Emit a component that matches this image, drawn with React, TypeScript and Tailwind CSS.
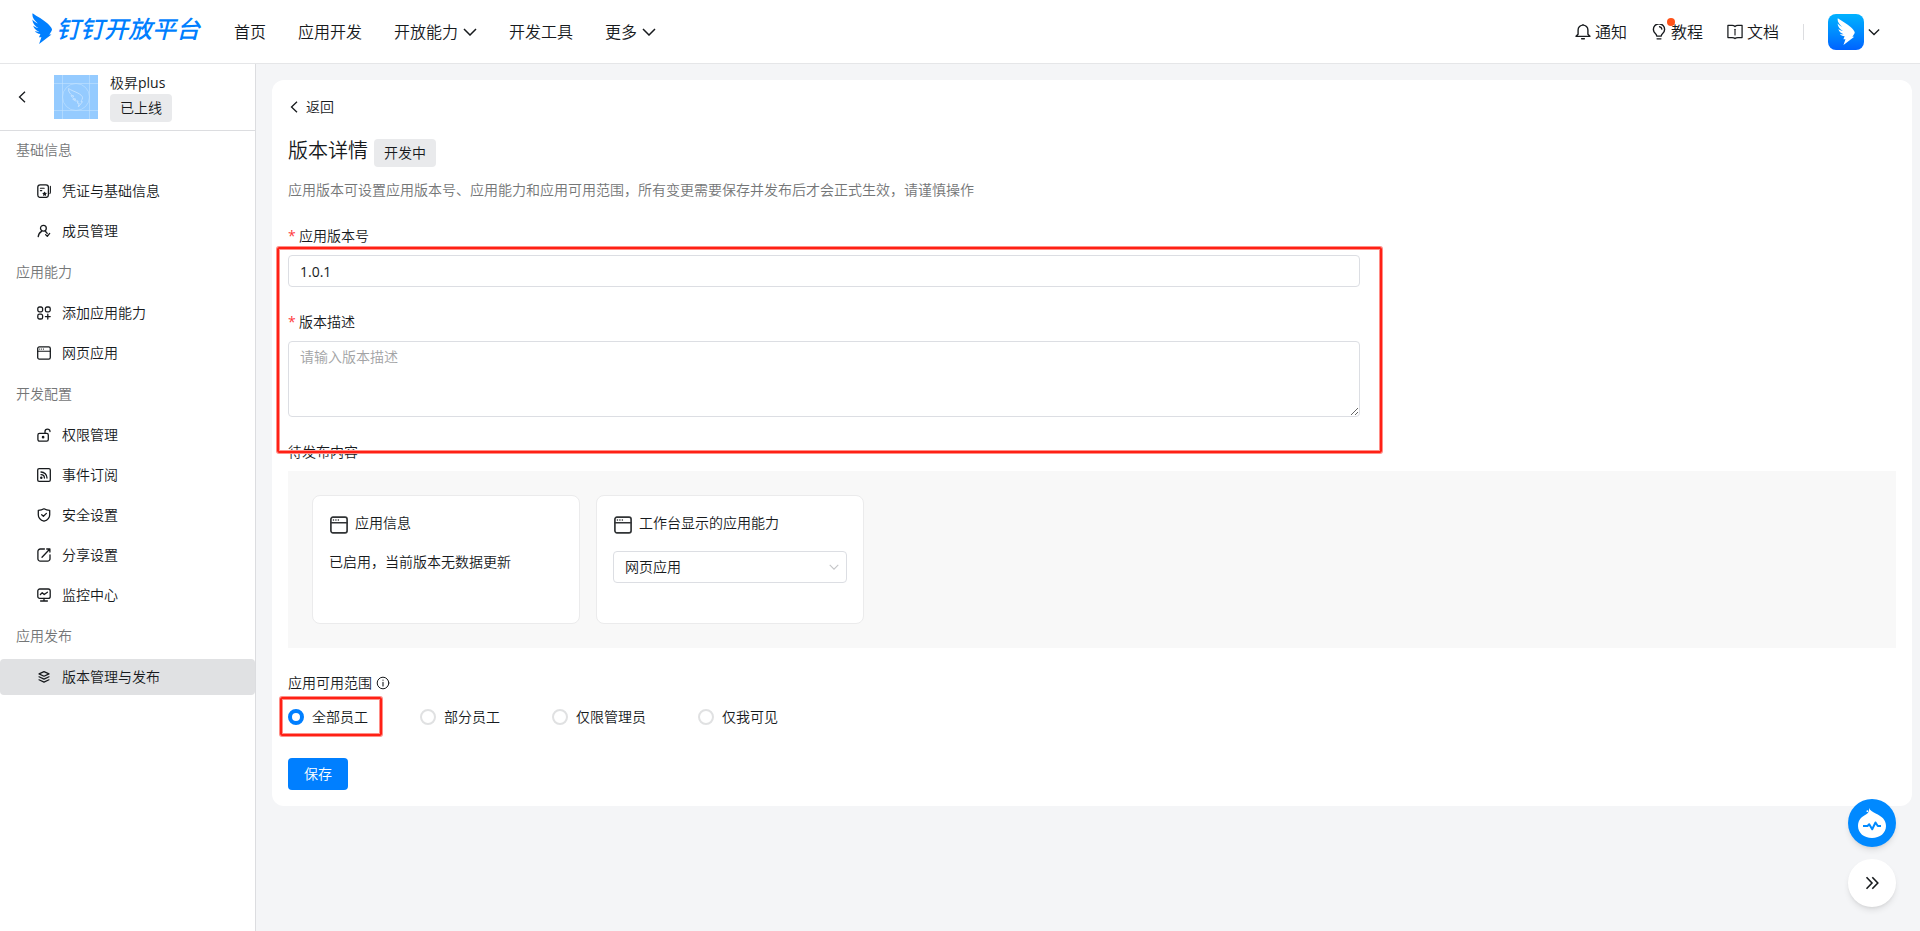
import { useState, type ReactNode } from "react";

interface IconProps {
  className?: string;
}

interface MenuItem {
  label: string;
  icon: (props: IconProps) => ReactNode;
}

interface MenuGroup {
  title: string;
  items: MenuItem[];
}

function Icon({ className = "size-3.5", children }: IconProps & { children: ReactNode }) {
  return (
    <svg
      viewBox="0 0 14 14"
      className={`shrink-0 ${className}`}
      fill="none"
      stroke="currentColor"
      strokeWidth="1.3"
      strokeLinecap="round"
      strokeLinejoin="round"
      aria-hidden="true"
    >
      {children}
    </svg>
  );
}

const CredentialIcon = (props: IconProps) => (
  <Icon {...props}>
    <rect x="0.8" y="0.8" width="10.6" height="12.6" rx="2.4" />
    <path d="M13.4 2.4v6l-.5 1.2M3.4 4.2h3.8M3.4 6.6h1.4" strokeWidth="1.1" />
    <path
      d="M7.6 7.4l.8 1.4 1.6.3-1.1 1.2.2 1.6-1.5-.7-1.5.7.2-1.6-1.1-1.2 1.6-.3z"
      fill="currentColor"
      stroke="none"
    />
  </Icon>
);

const MemberIcon = (props: IconProps) => (
  <Icon {...props}>
    <circle cx="6.4" cy="4.2" r="2.9" />
    <path d="M1.2 12.6c.3-2.7 1.5-4.3 3.4-5.3M8.2 7.3c1 .5 1.6 1.3 2 2.3M8.6 10.6l1.7 1.8 2.4-3" />
  </Icon>
);

const AddAbilityIcon = (props: IconProps) => (
  <Icon {...props}>
    <rect x="0.8" y="1" width="4.8" height="4.8" rx="1.6" />
    <rect x="8.4" y="1" width="4.8" height="4.8" rx="1.6" />
    <rect x="0.8" y="8.2" width="4.8" height="4.8" rx="1.6" />
    <path d="M10.8 8.2v4.8M8.4 10.6h4.8" />
  </Icon>
);

const WindowIcon = (props: IconProps) => (
  <Icon {...props}>
    <rect x="0.7" y="0.9" width="12.6" height="12.2" rx="1.6" />
    <path d="M.7 5.2h12.6" strokeWidth="1.1" />
    <path d="M2.6 3.1h.2M4.5 3.1h.2M6.4 3.1h.2" strokeWidth="1" />
  </Icon>
);

const UnlockIcon = (props: IconProps) => (
  <Icon {...props}>
    <rect x="0.9" y="5.4" width="10.4" height="7.8" rx="1.6" />
    <path d="M8 5.2V3.6a2.5 2.5 0 0 1 5 0" />
    <circle cx="6.1" cy="9.2" r="0.7" fill="currentColor" />
  </Icon>
);

const FeedIcon = (props: IconProps) => (
  <Icon {...props}>
    <rect x="0.7" y="0.7" width="12.6" height="12.6" rx="1.4" />
    <path d="M4 4c3.4 0 6 2.6 6 6M4 6.6c2 0 3.4 1.4 3.4 3.4" />
    <circle cx="4.3" cy="9.7" r="0.6" fill="currentColor" />
  </Icon>
);

const ShieldIcon = (props: IconProps) => (
  <Icon {...props}>
    <path d="M7 .8c1.7 1.1 3.5 1.6 5.7 1.6v4.3c0 3-2.2 5.4-5.7 6.5-3.5-1.1-5.7-3.5-5.7-6.5V2.4C3.5 2.4 5.3 1.9 7 .8z" />
    <path d="M4.7 6.7l1.7 1.6 3-2.9" />
  </Icon>
);

const ShareIcon = (props: IconProps) => (
  <Icon {...props}>
    <path d="M7.4 1H3.3A2.4 2.4 0 0 0 .9 3.4v7.3a2.4 2.4 0 0 0 2.4 2.4h7.3a2.4 2.4 0 0 0 2.4-2.4V6.8" />
    <path d="M5 9.2l7.6-8M9.7 1h3.2v3.1" />
  </Icon>
);

const MonitorIcon = (props: IconProps) => (
  <Icon {...props}>
    <rect x="0.8" y="1" width="12.4" height="9.4" rx="2" />
    <path d="M3.4 6.5l1.8-1.7 2 1.8 3.2-2.4M7 10.4v2.4M3.6 13h6.8" />
  </Icon>
);

const LayersIcon = (props: IconProps) => (
  <Icon {...props}>
    <path
      d="M7 1.6l5 2.3-5 2.3-5-2.3zM2 6.8l5 2.3 5-2.3M2 9.8l5 2.3 5-2.3"
      strokeWidth="1.2"
    />
  </Icon>
);

const BellIcon = (props: IconProps) => (
  <Icon {...props}>
    <path
      d="M.9 10.8h12.2L11.3 8.9V5.3a4.3 4.3 0 0 0-8.6 0v3.600zM5.800 12.900h2.400M7 1V.5"
      strokeWidth="1.2"
    />
  </Icon>
);

const BulbIcon = (props: IconProps) => (
  <Icon {...props}>
    <path
      d="M5 10.6c0-1.100-.4-1.500-1.200-2.200a4.900 4.900 0 1 1 6.400 0C9.400 9.100 9 9.500 9 10.600zM5.300 13h3.400M7.500 2.400c1.100.2 1.800.9 2 2"
      strokeWidth="1.2"
    />
  </Icon>
);

const BookIcon = (props: IconProps) => (
  <Icon {...props}>
    <path
      d="M7 2.2C6.300 1.500 5.500 1.300 4.500 1.300H.8v10.600h3.700c1 0 1.900.2 2.500.8.600-.6 1.500-.8 2.500-.8h3.700V1.300H9.500c-1 0-1.800.2-2.500.9z"
      strokeWidth="1.1"
    />
    <path d="M7 4.600v5" strokeWidth="1" />
  </Icon>
);

const InfoIcon = (props: IconProps) => (
  <Icon {...props}>
    <circle cx="7" cy="7" r="5.8" strokeWidth="1" />
    <path d="M7 6.3v3.700M7 4.100v.2" strokeWidth="1.1" />
  </Icon>
);

const ChevronDown = ({ className = "h-2 w-3.5" }: IconProps) => (
  <svg
    viewBox="0 0 14 8"
    className={`shrink-0 ${className}`}
    fill="none"
    stroke="currentColor"
    strokeWidth="1.5"
    aria-hidden="true"
  >
    <path d="M1 1l6 6 6-6" />
  </svg>
);

const ChevronLeft = ({ className = "h-3 w-2" }: IconProps) => (
  <svg
    viewBox="0 0 8 12"
    className={`shrink-0 ${className}`}
    fill="none"
    stroke="currentColor"
    strokeWidth="1.3"
    aria-hidden="true"
  >
    <path d="M7 .8L1.5 6 7 11.2" />
  </svg>
);

const Wing = ({ className = "" }: IconProps) => (
  <svg viewBox="0 0 20 31" className={`shrink-0 ${className}`} fill="currentColor" aria-hidden="true">
    <path d="M.6.2C4.8 3.3 11.6 6.7 15.3 10.2c2 1.900 4.600 4.500 4.700 6.200.1 1.400-1.700 3.300-2.700 5.200h2.200L7.100 31l2.300-6.700H7l1.400-3.400c-2.400-.1-4.500-1.100-5.500-2.900 1.300.5 2.900.7 4.300.6C4.100 17.500 2 15.500 1.200 12.700c1.500 1.200 3.500 2 5.200 2.300C2.800 12.900.7 10.200.3 6.400c1.500 1.700 3.500 3.100 5.500 4C2 7.200-.4 3.800.6.2z" />
  </svg>
);

const menuGroups: MenuGroup[] = [
  {
    title: "基础信息",
    items: [
      { label: "凭证与基础信息", icon: CredentialIcon },
      { label: "成员管理", icon: MemberIcon },
    ],
  },
  {
    title: "应用能力",
    items: [
      { label: "添加应用能力", icon: AddAbilityIcon },
      { label: "网页应用", icon: WindowIcon },
    ],
  },
  {
    title: "开发配置",
    items: [
      { label: "权限管理", icon: UnlockIcon },
      { label: "事件订阅", icon: FeedIcon },
      { label: "安全设置", icon: ShieldIcon },
      { label: "分享设置", icon: ShareIcon },
      { label: "监控中心", icon: MonitorIcon },
    ],
  },
  {
    title: "应用发布",
    items: [{ label: "版本管理与发布", icon: LayersIcon }],
  },
];

const navItems = [
  { label: "首页" },
  { label: "应用开发" },
  { label: "开放能力", dropdown: true },
  { label: "开发工具" },
  { label: "更多", dropdown: true },
];

const scopes = ["全部员工", "部分员工", "仅限管理员", "仅我可见"];

function Header() {
  return (
    <header className="flex h-16 shrink-0 items-center justify-between border-b border-[#e5e6e8] bg-white pr-10 pl-8 text-base">
      <div className="flex items-center gap-[34px]">
        <a href="#" className="-mt-1.5 flex items-center gap-1 text-[#007fff]">
          <Wing className="h-[31px] w-5" />
          <span className="text-2xl leading-8 font-medium italic">钉钉开放平台</span>
        </a>
        <nav className="flex items-center gap-8">
          {navItems.map((item) =>
            item.dropdown ? (
              <button key={item.label} type="button" className="flex items-center gap-[5px]">
                {item.label}
                <ChevronDown />
              </button>
            ) : (
              <a key={item.label} href="#">
                {item.label}
              </a>
            )
          )}
        </nav>
      </div>

      <div className="flex items-center gap-6">
        <a href="#" className="flex items-center gap-1">
          <BellIcon className="size-4" />
          通知
        </a>
        <a href="#" className="relative flex items-center gap-1">
          <BulbIcon className="size-4" />
          教程
          <span className="absolute -top-0.5 left-4 size-2 rounded-full bg-[#ff5219]" />
        </a>
        <a href="#" className="flex items-center gap-1">
          <BookIcon className="size-4" />
          文档
        </a>
        <span className="h-4 w-px bg-[#dcdde0]" />
        <button type="button" className="flex items-center gap-1" aria-label="账号">
          <span className="flex size-9 items-center justify-center rounded-lg bg-linear-to-b from-[#00b2ff] to-[#0062ff] text-white">
            <Wing className="h-[27px] w-[18px]" />
          </span>
          <ChevronDown className="h-2 w-3" />
        </button>
      </div>
    </header>
  );
}

function Sidebar() {
  return (
    <aside className="w-64 shrink-0 border-r border-[#dcdde0] bg-white">
      <div className="flex h-[67px] items-center border-b border-[#dcdde0] pl-[18px]">
        <button type="button" aria-label="返回应用列表">
          <ChevronLeft />
        </button>
        <svg viewBox="0 0 44 44" className="ml-7 size-11 shrink-0" fill="none" stroke="#c3e2ff" aria-hidden="true">
          <rect width="44" height="44" fill="#95cbff" stroke="none" />
          <path d="M8.5 0v44M35.5 0v44M0 8.5h44M0 35.5h44" strokeWidth="0.6" />
          <circle cx="22" cy="22" r="13.5" strokeWidth="0.6" />
          <path
            d="M14.5 13.5c4 2.800 11.500 4.400 13.700 8 1 1.700-.7 3.800-1.200 5.200h1.500L24.300 32l.8-3.800h-1.800l.8-2.200c-2.600.2-4.400-.4-5.200-1.800l3 .1c-2.600-.7-4.400-2-4.900-3.700l3 .8c-3.500-1.800-5.700-4.300-5.500-7.900z"
            strokeWidth="1"
          />
        </svg>
        <div className="ml-3 flex flex-col items-start">
          <span className="leading-5">
            极昇<span className="font-normal">plus</span>
          </span>
          <span className="mt-px rounded bg-[#e9eaec] px-2.5 leading-7">已上线</span>
        </div>
      </div>

      <nav className="-mt-0.5">
        {menuGroups.map((group) => (
          <div key={group.title}>
            <h2 className="pl-4 leading-[42px] text-[#747677]">{group.title}</h2>
            <div className="flex flex-col gap-1 py-0.5">
              {group.items.map(({ label, icon: ItemIcon }) => (
                <a
                  key={label}
                  href="#"
                  className={`flex h-9 items-center gap-[11px] rounded pl-[37px] ${
                    label === "版本管理与发布" ? "bg-[#e0e1e3]" : "hover:bg-[#f1f2f3]"
                  }`}
                >
                  <ItemIcon />
                  {label}
                </a>
              ))}
            </div>
          </div>
        ))}
      </nav>
    </aside>
  );
}

function FieldLabel({ htmlFor, children }: { htmlFor: string; children: ReactNode }) {
  return (
    <label htmlFor={htmlFor} className="flex">
      <span className="w-[11px] font-normal text-[#ff3b3d]">*</span>
      {children}
    </label>
  );
}

// Red frame that points out the part to fill in
function Highlight({ className }: { className: string }) {
  return (
    <div
      className={`pointer-events-none absolute z-10 rounded-xs border-2 border-[#ff2015] shadow-[0_0_0_1px_#ff8f88,inset_0_0_0_1px_#ff8f88] ${className}`}
    />
  );
}

function VersionDetail() {
  const [version, setVersion] = useState("1.0.1");
  const [description, setDescription] = useState("");
  const [scope, setScope] = useState(scopes[0]);

  return (
    <section className="rounded-xl bg-white p-4">
      <button type="button" className="flex items-center gap-2 pl-0.5">
        <ChevronLeft />
        返回
      </button>

      <div className="mt-[21px] flex items-start gap-1.5">
        <h1 className="text-xl leading-6">版本详情</h1>
        <span className="rounded bg-[#e9eaec] px-2.5 leading-7">开发中</span>
      </div>
      <p className="mt-3 text-[#747677]">
        应用版本可设置应用版本号、应用能力和应用可用范围，所有变更需要保存并发布后才会正式生效，请谨慎操作
      </p>

      <div className="relative mt-6 w-2/3">
        <FieldLabel htmlFor="version">应用版本号</FieldLabel>
        <input
          id="version"
          type="text"
          value={version}
          onChange={(e) => setVersion(e.target.value)}
          className="mt-2 block h-8 w-full rounded border border-[#dcdee3] px-[11px] font-normal outline-none"
        />
        <div className="mt-6">
          <FieldLabel htmlFor="description">版本描述</FieldLabel>
        </div>
        <textarea
          id="description"
          placeholder="请输入版本描述"
          value={description}
          onChange={(e) => setDescription(e.target.value)}
          className="mt-2 block h-[76px] w-full rounded border border-[#dcdee3] px-[11px] py-1 outline-none placeholder:text-[#a2a3a5]"
        />
        <Highlight className="top-[22px] -right-[22px] -bottom-9 -left-[11px]" />
      </div>

      <h2 className="mt-6">待发布内容</h2>
      <div className="mt-2 flex gap-4 bg-[#f8f8f8] p-6">
        <div className="w-[268px] rounded-lg border border-[#ebebec] bg-white px-4 pt-4 pb-10">
          <h3 className="flex gap-[7px] pl-px">
            <WindowIcon className="mt-1 size-[18px] text-[#303335]" />
            应用信息
          </h3>
          <p className="mt-[17px]">已启用，当前版本无数据更新</p>
        </div>
        <div className="w-[268px] rounded-lg border border-[#ebebec] bg-white px-4 pt-4 pb-10">
          <label htmlFor="ability" className="flex gap-[7px] pl-px">
            <WindowIcon className="mt-1 size-[18px] text-[#303335]" />
            工作台显示的应用能力
          </label>
          <div className="relative mt-[17px]">
            <select
              id="ability"
              className="block h-8 w-full appearance-none rounded border border-[#dcdee3] bg-white px-[11px] outline-none"
            >
              <option>网页应用</option>
            </select>
            <ChevronDown className="pointer-events-none absolute top-3 right-2 h-2 w-2.5 text-[#c4c5c7]" />
          </div>
        </div>
      </div>

      <fieldset className="mt-6">
        <legend className="flex items-center gap-1">
          应用可用范围
          <InfoIcon />
        </legend>
        <div className="mt-3 flex gap-[52px]">
          {scopes.map((name) => (
            <label key={name} className="relative flex items-center gap-2">
              <input
                type="radio"
                name="scope"
                checked={scope === name}
                onChange={() => setScope(name)}
                className="size-4 appearance-none rounded-full border-2 border-[#e0e1e2] bg-white checked:border-[4px] checked:border-[#007fff]"
              />
              {name}
              {name === scopes[0] && <Highlight className="-top-[9px] -right-[14px] -bottom-2 -left-2" />}
            </label>
          ))}
        </div>
      </fieldset>

      <button type="button" className="mt-[30px] block h-8 rounded bg-[#007fff] px-4 text-white">
        保存
      </button>
    </section>
  );
}

function FloatingActions() {
  return (
    <div className="fixed right-6 bottom-6 flex flex-col gap-3">
      <button
        type="button"
        aria-label="智能助手"
        className="flex size-12 items-center justify-center rounded-full bg-[#0089ff] shadow-md"
      >
        <svg viewBox="0 0 30 32" className="h-8 w-[30px]" fill="none" aria-hidden="true">
          <path
            d="M12.2 1c.8 2.600 3.300 3.800 6.500 5.500C24.500 9 29 12.800 29 19c0 7-6 12-14 12S1 26 1 19C1 12.800 5 9.500 9.300 7.300c2-1.200 3-3 2.900-6.300z"
            fill="#fff"
          />
          <circle cx="10.4" cy="4.2" r="0.9" fill="#fff" />
          <path
            d="M6 19h4.500l1.700-1.700 3 5 3.300-6.800 2.300 3.500H24"
            stroke="#0089ff"
            strokeWidth="2"
            strokeLinejoin="round"
          />
        </svg>
      </button>
      <button
        type="button"
        aria-label="收起"
        className="flex size-12 items-center justify-center rounded-full bg-white shadow-md"
      >
        <svg
          viewBox="0 0 14 14"
          className="size-3.5"
          fill="none"
          stroke="currentColor"
          strokeWidth="1.6"
          aria-hidden="true"
        >
          <path d="M1.5 1.3L7 7l-5.500 5.700M7.300 1.300L12.800 7l-5.500 5.700" />
        </svg>
      </button>
    </div>
  );
}

export default function App() {
  return (
    <div className="flex min-h-screen flex-col bg-[#f4f5f7] font-['Open_Sans','Noto_Sans_CJK_SC',sans-serif] text-[14px] leading-[22px] font-[350] text-[#171a1d]">
      <Header />
      <div className="flex flex-1">
        <Sidebar />
        <main className="min-w-0 flex-1 py-4 pr-2 pl-4">
          <VersionDetail />
        </main>
      </div>
      <FloatingActions />
    </div>
  );
}
